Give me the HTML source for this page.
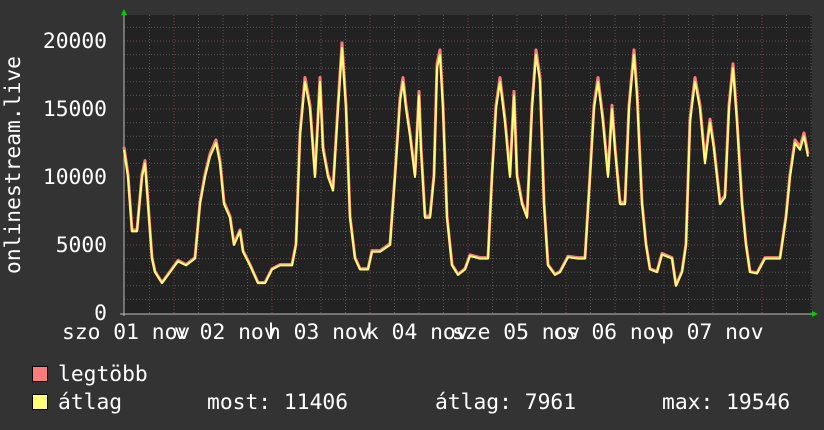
<!DOCTYPE html>
<html><head><meta charset="utf-8"><style>
html,body{margin:0;padding:0;background:#333;}
svg{display:block}
text{font-family:"DejaVu Sans Mono","Liberation Mono",monospace;font-size:21.3px;fill:#fff}
</style></head><body>
<svg id="s" width="824" height="430" xmlns="http://www.w3.org/2000/svg">
<rect width="824" height="430" fill="#333"/>
<rect x="124" y="15" width="688" height="299" fill="#222"/>
<g id="grid"></g>
<line x1="124" y1="12" x2="124" y2="316" stroke="#bbb" stroke-width="1"/>
<line x1="120" y1="314" x2="814" y2="314" stroke="#bbb" stroke-width="1"/>
<polygon points="121,15 127,15 124,9" fill="#0c0"/>
<polygon points="812,311 812,317 818,314" fill="#0c0"/>
<polyline id="red" fill="none" stroke="#ff7a7a" stroke-width="3" stroke-linejoin="round"/>
<polyline id="yel" fill="none" stroke="#ffff77" stroke-width="2" stroke-linejoin="round"/>
<text x="107" y="48" text-anchor="end">20000</text>
<text x="107" y="116" text-anchor="end">15000</text>
<text x="107" y="184" text-anchor="end">10000</text>
<text x="107" y="252" text-anchor="end">5000</text>
<text x="107" y="320" text-anchor="end">0</text>
<text transform="translate(20,165) rotate(-90)" text-anchor="middle">onlinestream.live</text>
<text x="62" y="339">szo 01 nov</text>
<text x="174" y="339">v 02 nov</text>
<text x="268" y="339">h 03 nov</text>
<text x="366" y="339">k 04 nov</text>
<text x="452" y="339">sze 05 nov</text>
<text x="553" y="339">cs 06 nov</text>
<text x="661" y="339">p 07 nov</text>
<rect x="32.5" y="366.5" width="15" height="15" fill="#ff7a7a" stroke="#000"/>
<rect x="32.5" y="394.5" width="15" height="15" fill="#ffff77" stroke="#000"/>
<text x="58" y="381">legtöbb</text>
<text x="58" y="409">átlag</text>
<text x="207" y="409">most: 11406</text>
<text x="435" y="409">átlag: 7961</text>
<text x="662" y="409">max: 19546</text>
</svg>
<script>
var g=document.getElementById('grid'),h='';
for(var v=1000;v<=21000;v+=1000){var y=313-v*0.0136;if(y<15)break;
h+='<line x1="124" y1="'+y+'" x2="812" y2="'+y+'" stroke="'+(v%5000==0?'#6a4a4a':'#555')+'" stroke-dasharray="1,2"/>';}
for(var x=149.5;x<812;x+=24.5){var d=Math.abs(((x-174)%98+98)%98)<1;
h+='<line x1="'+x+'" y1="15" x2="'+x+'" y2="314" stroke="'+(d?'#7a3a3a':'#555')+'" stroke-dasharray="1,2"/>';}
g.innerHTML=h;
var p=[124,12000,128,10000,132,6000,137,6000,142,10000,145,11000,148,8000,152,4000,155,3000,162,2200,170,3000,178,3800,186,3500,195,4000,200,8000,205,10000,210,11500,216,12500,220,11000,224,8000,230,7000,234,5000,240,6000,243,4500,250,3500,258,2200,265,2200,272,3200,280,3500,292,3500,296,5000,300,13000,305,17000,310,15000,315,10000,320,17000,323,12000,328,10000,333,9000,338,15000,342,19500,346,15000,350,7000,355,4000,360,3200,368,3200,372,4500,380,4500,390,5000,395,10000,400,15500,403,17000,406,15000,410,13000,415,10000,419,16000,421,12000,425,7000,430,7000,434,10000,437,18000,440,19000,443,15000,447,7000,452,3500,458,2800,465,3200,470,4200,480,4000,488,4000,492,10000,496,15000,500,17000,505,14000,510,10000,514,16000,517,10000,522,8000,527,7000,532,15000,536,19000,540,17000,544,8000,548,3500,555,2800,560,3000,568,4100,578,4000,585,4000,590,10000,594,15000,598,17000,603,14000,608,10000,612,15000,615,12000,620,8000,625,8000,629,15000,634,19000,637,16000,642,8000,646,5000,650,3200,657,3000,662,4300,672,4000,676,2000,682,3000,686,5000,690,14000,695,17000,700,15000,705,11000,710,14000,714,12000,720,8000,725,8500,729,15000,733,18000,737,14000,742,8000,746,5000,750,3000,757,2900,765,4000,780,4000,786,7000,790,10000,795,12500,800,12000,804,13000,808,11500];
var a='',b='';for(var i=0;i<p.length;i+=2){var y=313-p[i+1]*0.0136;a+=p[i]+','+(y-5*p[i+1]/20000)+' ';b+=p[i]+','+y+' ';}
document.getElementById('red').setAttribute('points',a);
document.getElementById('yel').setAttribute('points',b);
</script>
</body></html>
